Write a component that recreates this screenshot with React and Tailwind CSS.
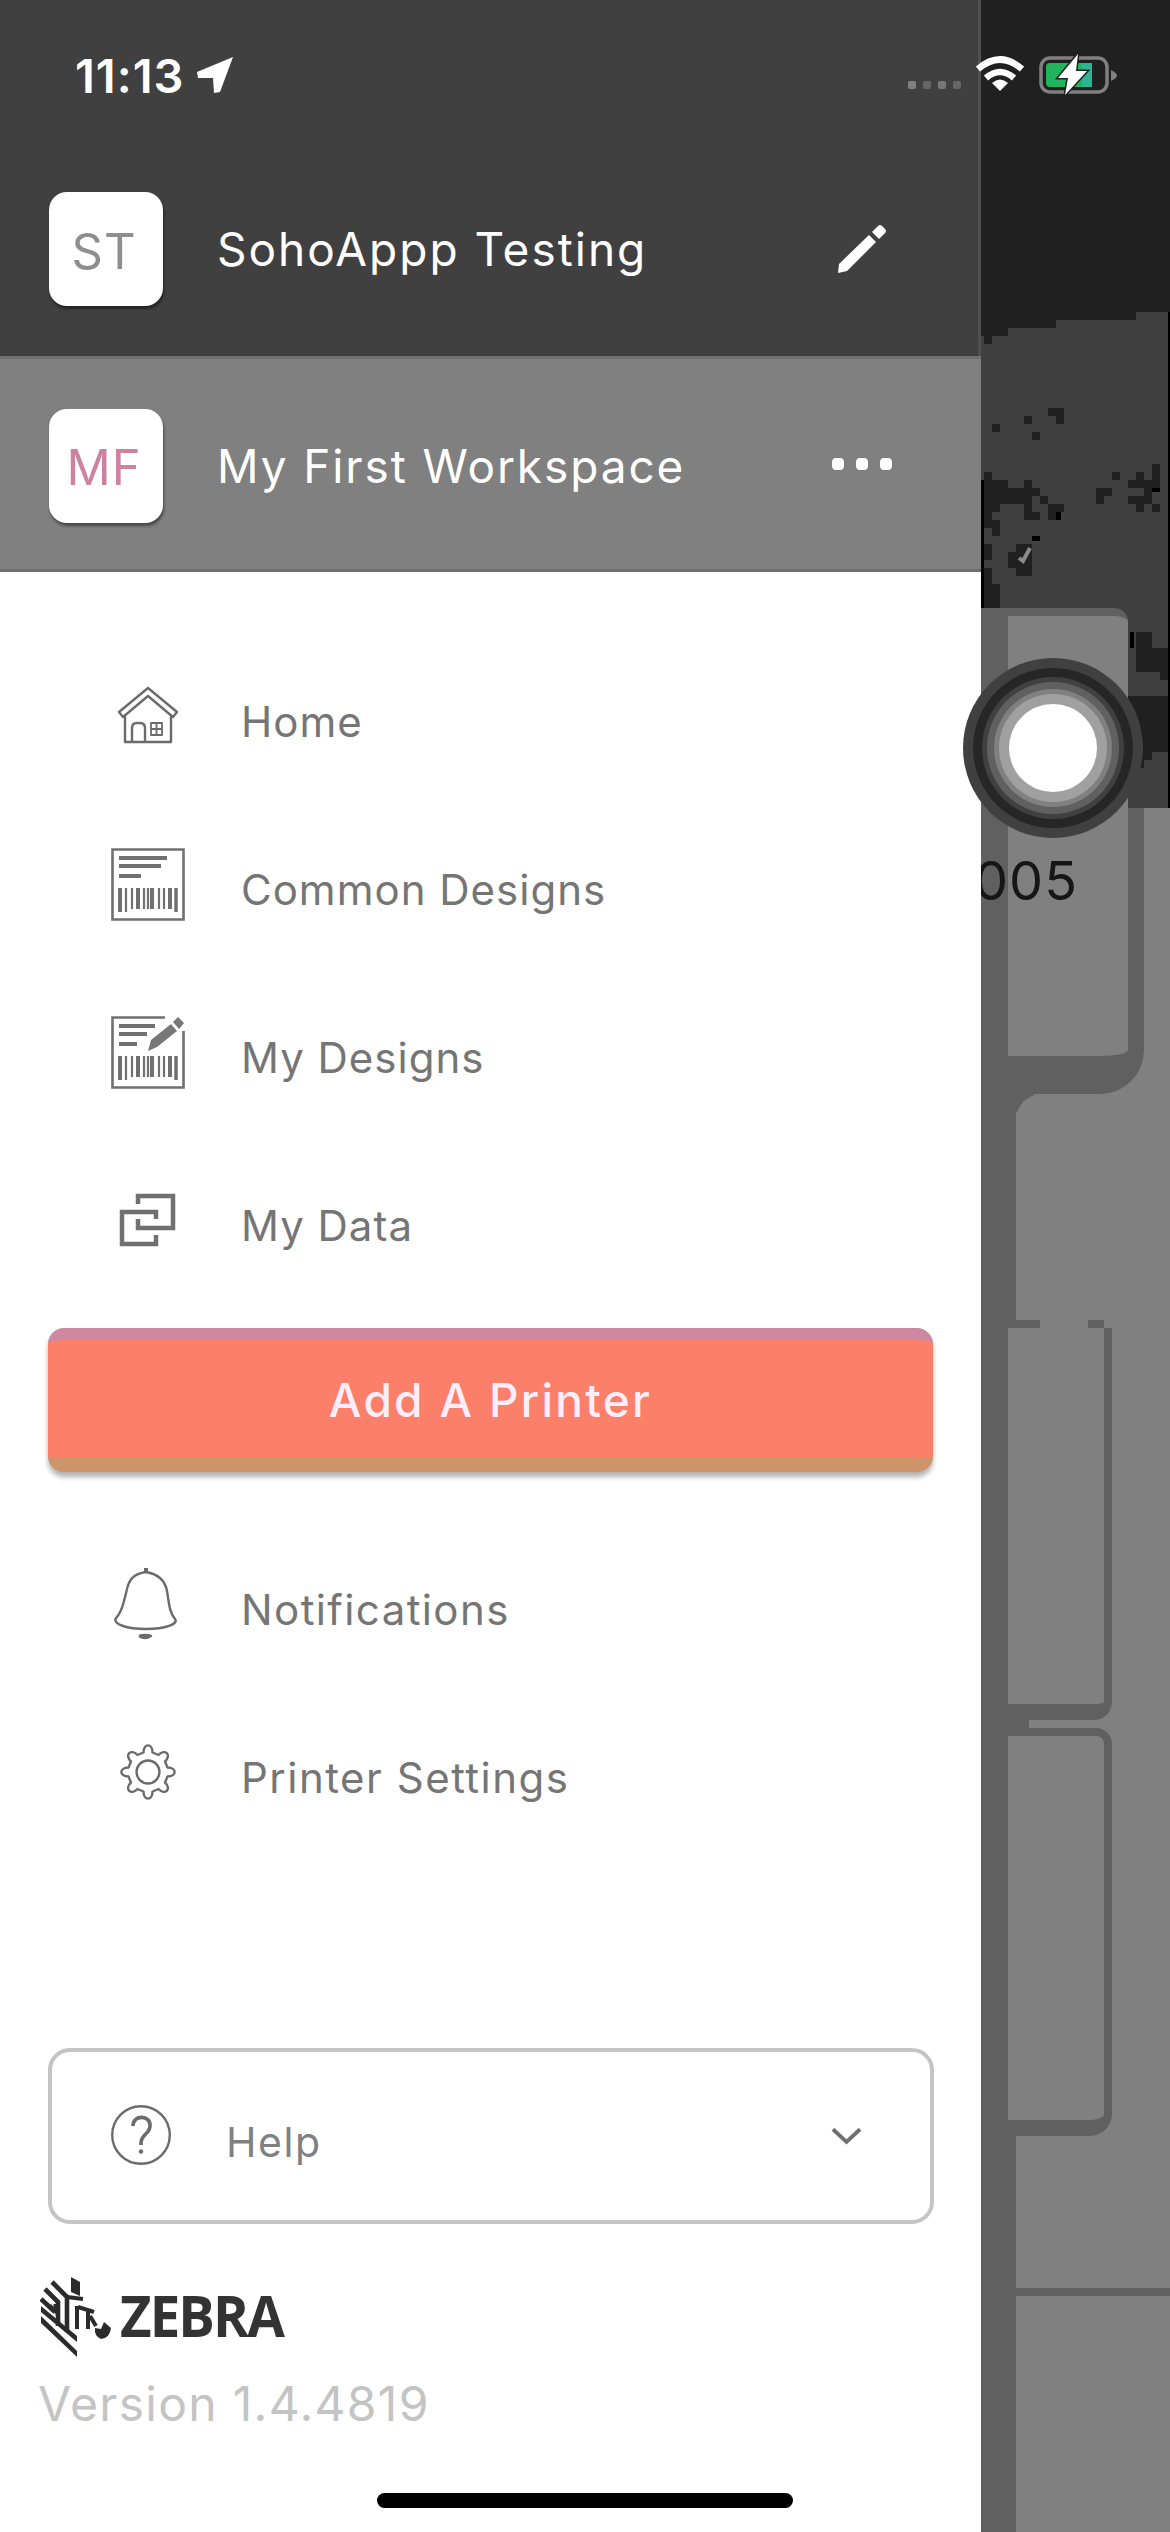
import React from "react";

const DARK_BLOCKS = [
  [1048, 408, 16, 8], [1056, 416, 8, 8], [1024, 416, 8, 8], [992, 424, 8, 8], [1032, 432, 8, 8],
  [1152, 464, 8, 24], [984, 472, 8, 8], [1112, 472, 8, 8], [1136, 472, 8, 8],
  [981, 480, 27, 16], [1024, 480, 8, 8], [1128, 480, 32, 8],
  [1008, 488, 32, 8], [1096, 488, 16, 8], [1144, 488, 8, 8],
  [981, 496, 51, 8], [1040, 496, 8, 8], [1096, 496, 8, 8], [1128, 496, 24, 8],
  [981, 504, 19, 8], [1024, 504, 8, 8], [1048, 504, 16, 8], [1136, 504, 8, 8], [1152, 504, 8, 8],
  [981, 512, 11, 8], [1024, 512, 16, 8], [1048, 512, 8, 8], [981, 520, 19, 8], [992, 528, 8, 8],
  [981, 544, 11, 16], [1016, 544, 16, 32], [1008, 552, 8, 16], [981, 568, 11, 16], [981, 584, 19, 24],
  [1136, 632, 16, 40], [1152, 648, 16, 24], [1160, 672, 8, 8], [1128, 696, 40, 56],
  [1128, 752, 24, 8], [1128, 760, 16, 8], [1128, 768, 8, 16],
];
const BLACK_BLOCKS = [
  [1152, 488, 8, 4], [1056, 512, 5, 8], [1032, 536, 8, 5], [1130, 632, 4, 16], [1168, 312, 2, 496], [981, 480, 3, 128],
];

function Photo() {
  return (
    <svg className="block h-[808px] w-[189px]" viewBox="981 0 189 808" shapeRendering="crispEdges">
      <rect x="981" y="0" width="189" height="808" fill="#404040" />
      <path d="M981 0H1170V312H1136V320H1056V328H1008V336H992V344H984V336H981Z" fill="#202020" />
      {DARK_BLOCKS.map(([x, y, w, h], i) => (
        <rect key={i} x={x} y={y} width={w} height={h} fill="#202020" />
      ))}
      {BLACK_BLOCKS.map(([x, y, w, h], i) => (
        <rect key={i} x={x} y={y} width={w} height={h} fill="#000" />
      ))}
      <path d="M1019 558l4 3 7-13" stroke="#8a8a8a" strokeWidth="4" fill="none" shapeRendering="auto" />
    </svg>
  );
}

function PageBehind() {
  return (
    <div className="ml-[981px] flex h-[2532px] w-[189px] flex-col bg-[#808080]">
      <Photo />
      <div className="-mt-[200px] h-[200px] w-[147px] shrink-0 rounded-tr-[14px] border-l-[27px] border-t-[8px] border-[#606060] bg-[#808080]" />
      <div className="h-[286px] w-[163px] shrink-0 rounded-br-[44px] border-b-[38px] border-l-[27px] border-r-[16px] border-[#606060] bg-[#808080]">
        <div className="-ml-[34px] mt-[40px] whitespace-nowrap text-[54px] leading-[66px] tracking-[1px] text-[#161616]">005</div>
      </div>
      <div className="h-[226px] w-[60px] shrink-0 border-l-[35px] border-[#606060]">
        <div className="h-[26px] w-[26px] rounded-tl-[26px] bg-[#808080] shadow-[-8px_-8px_0_0_#606060]" />
      </div>
      <div className="flex h-[8px] w-[123px] shrink-0 justify-between">
        <div className="w-[59px] bg-[#606060]" />
        <div className="w-[16px] bg-[#606060]" />
      </div>
      <div className="h-[392px] w-[131px] shrink-0 rounded-br-[18px] border-b-[16px] border-l-[27px] border-r-[8px] border-[#606060] bg-[#808080]" />
      <div className="h-[8px] w-[48px] shrink-0 bg-[#606060]" />
      <div className="h-[408px] w-[131px] shrink-0 rounded-br-[22px] rounded-tr-[16px] border-b-[16px] border-l-[27px] border-r-[8px] border-t-[8px] border-[#606060] bg-[#808080]" />
      <div className="h-[152px] w-[189px] shrink-0 border-l-[35px] border-[#606060]" />
      <div className="h-[8px] shrink-0 bg-[#606060]" />
      <div className="grow border-l-[35px] border-[#606060]" />
    </div>
  );
}

function HomeIcon() {
  return (
    <svg className="h-[60px] w-[62px]" viewBox="0 0 62 60" fill="none" stroke="#6b6b6b" strokeWidth="2.4" strokeLinejoin="round">
      <path d="M31 2L60 26L56 31L31 10L6 31L2 26Z" />
      <path d="M8 30V56H54V30" />
      <path d="M15 56V42Q15 37 20 37H23Q28 37 28 42V56" />
      <path d="M34 37H45V49H34ZM39.500 37V49M34 43H45" strokeWidth="1.8" />
    </svg>
  );
}

function LabelIcon({ pencil }) {
  return (
    <svg className="h-[73px] w-[74px]" viewBox="0 0 74 73" fill="none" stroke="#707070">
      <path d={pencil ? "M54 1.500H1.500V71.500H72.500V15" : "M1.500 1.500H72.500V71.500H1.500Z"} strokeWidth="2.600" />
      <path d={pencil ? "M8 10H44M8 18H36M8 28H26" : "M8 10H56M8 18H50M8 28H30"} strokeWidth="4" />
      <path d="M9 40V64M27 40V61M41 40V61M59 40V61" strokeWidth="4" />
      <path d="M15 40V64M21 40V61M33 40V61M37 40V61M48 40V61M53 40V61" strokeWidth="2.200" />
      <path d="M65 40V64" strokeWidth="3.500" />
      {pencil && (
        <g fill="#777" stroke="none">
          <path d="M37 35L40 24L60 8L66 15L46 31Z" />
          <path d="M62 6L67 1L73 7L68 13Z" />
        </g>
      )}
    </svg>
  );
}

function DataIcon() {
  return (
    <svg className="mt-[2px] h-[58px] w-[58px]" viewBox="0 0 58 58" fill="none" stroke="#707070" strokeWidth="4.500">
      <path d="M19 12V4H54V36H19V27" />
      <path d="M37 27V20H3V52H37V43" />
    </svg>
  );
}

function BellIcon() {
  return (
    <svg className="-ml-[5px] h-[74px] w-[66px]" viewBox="0 0 66 74" fill="none" stroke="#6b6b6b" strokeWidth="2.400" strokeLinejoin="round">
      <path d="M33 5C20 7 16 13 14 22C11 34 9 45 3 51C-1 57 14 62 33 62C52 62 66 57 62 52C56 45 56 35 54 24C52 13 45 7 33 5Z" />
      <path d="M33 1V6" strokeWidth="4" />
      <path d="M26 69Q32 73 38 69Q32 67 26 69" fill="#6b6b6b" />
    </svg>
  );
}

function GearIcon() {
  return (
    <svg className="h-[58px] w-[58px]" viewBox="0 0 58 58" fill="none" stroke="#6b6b6b" strokeWidth="2.400" strokeLinejoin="round">
      <circle cx="29" cy="29" r="11.500" />
      <path d="M24.500 9.500C24.500 0 33.500 0 33.500 9.500L39.500 12C46 5 53 12 46 18.500L48.500 24.500C58 24.500 58 33.500 48.500 33.500L46 39.500C53 46 46 53 39.500 46L33.500 48.500C33.500 58 24.500 58 24.500 48.500L18.500 46C12 53 5 46 12 39.500L9.500 33.500C0 33.500 0 24.500 9.500 24.500L12 18.500C5 12 12 5 18.500 12Z" />
    </svg>
  );
}

function HelpIcon() {
  return (
    <svg className="h-[62px] w-[62px]" viewBox="0 0 62 62" fill="none" stroke="#6b6b6b">
      <circle cx="31" cy="31" r="28.800" strokeWidth="2.400" />
      <path d="M23 22C23 10 41 11 40 22C40 30 31 30 31 39V41" strokeWidth="3.600" />
      <circle cx="31" cy="47.500" r="2.200" fill="#6b6b6b" stroke="none" />
    </svg>
  );
}

function ZebraMark() {
  return (
    <svg className="h-[84px] w-[72px]" viewBox="0 0 72 84" fill="none" stroke="#2b2b2b" strokeWidth="4.600">
      <path d="M1 49L37 83V77L1 42Z" fill="#2b2b2b" stroke="none" />
      <path d="M1 32L37 62V68L1 38Z" fill="#2b2b2b" stroke="none" />
      <path d="M1 25L15 38M5 15L18 28V52M12 8L27 23V58" />
      <path d="M10 31L15 37V30" strokeWidth="3" />
      <path d="M31 3L40 8V22L31 18Z" fill="#2b2b2b" stroke="none" />
      <path d="M27 23L43 25M37 32V55M38 33L54 38M48 38V55M50 42L56 52" strokeWidth="4" />
      <path d="M64 48L71 54Q70 64 61 65Q54 62 55 54L61 55Z" fill="#2b2b2b" stroke="none" />
    </svg>
  );
}

function MenuRow({ icon, children, spacing = "tracking-[1px]" }) {
  return (
    <div className="flex h-[168px] items-center">
      <div className="-mt-[12px] ml-[107px] flex w-[82px] justify-center">{icon}</div>
      <span className={"ml-[52px] whitespace-nowrap text-[42px] leading-none text-[#757575] " + spacing}>{children}</span>
    </div>
  );
}

function Avatar({ children, color }) {
  return (
    <div className={"ml-[49px] flex h-[114px] w-[114px] shrink-0 items-center justify-center rounded-[18px] bg-white text-[49px] leading-none shadow-[1px_3px_3px_rgba(0,0,0,0.45)] " + color}>
      {children}
    </div>
  );
}

function Drawer() {
  return (
    <aside className="absolute left-0 top-0 flex h-[2532px] w-[981px] flex-col overflow-hidden bg-white">
      <header className="flex h-[356px] items-center border-r-[3px] border-[#505050] bg-[#404040] pt-[141px]">
        <Avatar color="text-[#8e8e8e] pr-[4px] pt-[6px] tracking-[1px]">ST</Avatar>
        <span className="ml-[54px] w-[600px] whitespace-nowrap text-[46px] leading-none tracking-[2px] text-white">SohoAppp Testing</span>
        <svg className="ml-[20px] h-[50px] w-[50px] shrink-0" viewBox="0 0 50 50" fill="#fff">
          <path d="M1 49L2 40L32 11L39 18L10 47Z" />
          <path d="M35 8L41 2Q43 0 45 2L48 5Q50 7 48 9L42 15Z" />
        </svg>
      </header>
      <div className="flex h-[216px] items-center border-y-[3px] border-[#707070] bg-[#808080] pt-[3px]">
        <Avatar color="text-[#cf82a0] pr-[4px] pt-[4px] tracking-[1px]">MF</Avatar>
        <span className="ml-[54px] w-[615px] whitespace-nowrap text-[46px] leading-none tracking-[1.9px] text-white">My First Workspace</span>
        <div className="-mt-[3px] flex gap-[12px]">
          <i className="size-[12px] rounded-[4px] bg-white" />
          <i className="size-[12px] rounded-[4px] bg-white" />
          <i className="size-[12px] rounded-[4px] bg-white" />
        </div>
      </div>
      <nav className="mt-[66px]">
        <MenuRow icon={<HomeIcon />}>Home</MenuRow>
        <MenuRow icon={<LabelIcon />}>Common Designs</MenuRow>
        <MenuRow icon={<LabelIcon pencil />}>My Designs</MenuRow>
        <MenuRow icon={<DataIcon />}>My Data</MenuRow>
      </nav>
      <button className="ml-[48px] mt-[18px] flex h-[144px] w-[885px] shrink-0 items-center justify-center rounded-[16px] border-b-[14px] border-t-[12px] border-b-[#cc9468] border-t-[#cc88a0] bg-[#fc7f6a] pt-[2px] text-[46px] font-medium leading-none tracking-[2.3px] text-[#ffeefa] shadow-[0_5px_5px_rgba(0,0,0,0.3)]">
        Add A Printer
      </button>
      <nav className="mt-[54px]">
        <MenuRow icon={<BellIcon />} spacing="tracking-[1.4px]">Notifications</MenuRow>
        <MenuRow icon={<GearIcon />} spacing="tracking-[1.5px]">Printer Settings</MenuRow>
      </nav>
      <div className="ml-[48px] mt-[186px] flex h-[176px] w-[886px] shrink-0 items-center rounded-[22px] border-4 border-[#c4c4c4]">
        <div className="-mt-[2px] ml-[58px]"><HelpIcon /></div>
        <span className="ml-[54px] mt-[12px] w-[605px] text-[41px] leading-none tracking-[1.6px] text-[#808080]">Help</span>
        <svg className="h-[18px] w-[31px]" viewBox="0 0 32 18" fill="none" stroke="#707070" strokeWidth="4">
          <path d="M2 2L16 15L30 2" />
        </svg>
      </div>
      <div className="ml-[40px] mt-[50px] flex h-[84px] shrink-0 items-center">
        <ZebraMark />
        <span className="-mt-[2px] ml-[8px] origin-left scale-x-[0.94] text-[58px] font-bold leading-none tracking-[-2px] text-[#333] [font-family:'Open_Sans',sans-serif]">ZEBRA</span>
      </div>
      <span className="ml-[38px] mt-[16px] text-[48px] leading-[60px] tracking-[1.3px] text-[#c4c4c4]">Version 1.4.4819</span>
    </aside>
  );
}

function StatusBar() {
  return (
    <div className="absolute inset-x-0 top-0 flex h-[150px] items-center text-white">
      <span className="ml-[75px] w-[121px] whitespace-nowrap text-[47px] font-semibold leading-none tracking-[1px]">11:13</span>
      <svg className="h-[36px] w-[38px]" viewBox="0 0 36 36" fill="#fff"><path d="M36 0L0 15L1 21L16 21L17 36L23 35Z" /></svg>
      <div className="ml-[674px] mt-[20px] flex gap-[7px]">
        <i className="size-[8px] rounded-[2px] bg-[#808080]" />
        <i className="size-[8px] rounded-[2px] bg-[#666]" />
        <i className="size-[8px] rounded-[2px] bg-[#777]" />
        <i className="size-[8px] rounded-[2px] bg-[#666]" />
      </div>
      <svg className="-mt-[3px] ml-[15px] h-[36px] w-[48px]" viewBox="0 0 48 36" fill="none" stroke="#fff" strokeWidth="6.500">
        <path d="M2 13Q24 -6 46 13" />
        <path d="M10 22Q24 10 38 22" />
        <path d="M24 35L16 27Q24 20 32 27Z" fill="#fff" stroke="none" />
      </svg>
      <svg className="ml-[14px] h-[44px] w-[84px]" viewBox="0 0 84 44" fill="none">
        <rect x="3" y="5" width="66" height="34" rx="9" stroke="#808080" strokeWidth="3.500" />
        <rect x="8" y="10" width="46" height="24" rx="4" fill="#22b45c" />
        <rect x="44" y="10" width="10" height="24" fill="#2bb594" />
        <path d="M73 17V28Q79 25 79 22.500Q79 20 73 17Z" fill="#808080" />
        <path d="M40 1L20 25H30L27 42L49 18H38Z" fill="#fff" stroke="#202020" strokeWidth="3" paintOrder="stroke" />
      </svg>
    </div>
  );
}

export default function App() {
  return (
    <div className="relative h-[2532px] w-[1170px] overflow-hidden bg-[#606060] font-normal [font-family:Inter,'Liberation_Sans',sans-serif]">
      <PageBehind />
      <Drawer />
      <StatusBar />
      <svg className="absolute left-[961px] top-[656px] h-[184px] w-[184px]" viewBox="0 0 184 184">
        <circle cx="92" cy="92" r="90" fill="#404040" />
        <circle cx="92" cy="92" r="80" fill="#262626" />
        <circle cx="92" cy="92" r="71" fill="#404040" />
        <circle cx="92" cy="92" r="66" fill="#606060" />
        <circle cx="92" cy="92" r="59" fill="#808080" />
        <circle cx="92" cy="92" r="54" fill="#a0a0a0" />
        <circle cx="92" cy="92" r="44" fill="#fff" />
      </svg>
      <div className="absolute bottom-[24px] left-[377px] h-[15px] w-[416px] rounded-full bg-black" />
    </div>
  );
}
